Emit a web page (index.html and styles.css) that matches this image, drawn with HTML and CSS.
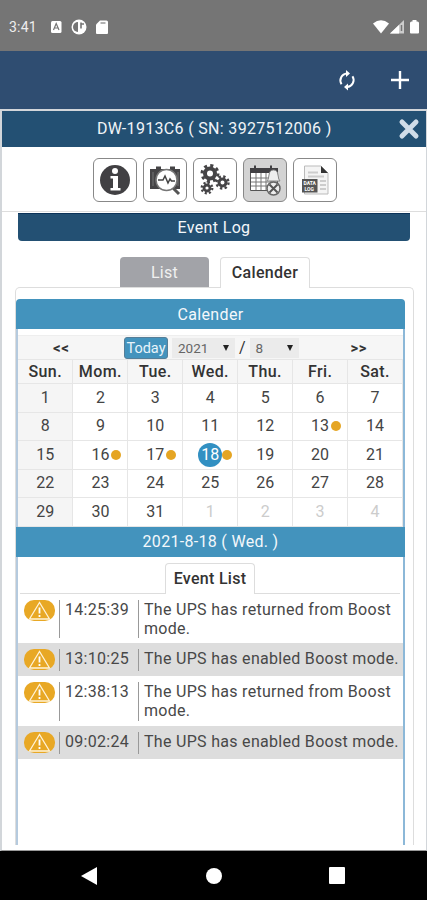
FILE: index.html
```html
<!DOCTYPE html>
<html lang="en">

<head>
    <meta charset="UTF-8">
    <meta name="viewport" content="width=device-width, initial-scale=1.0">
    <title>Event Log</title>
    <link rel="stylesheet" href="styles.css">
</head>

<body>
    <div class="status-bar">
        <span class="clock">3:41</span>
        <svg class="status-left" width="60" height="18" viewBox="0 0 60 18">
            <rect x="2" y="3" width="10.500" height="12" rx="1.500" fill="#fff" />
            <path d="M4.500 12L7.200 5.500L10 12M5.500 10h3.500" fill="none" stroke="#757575" stroke-width="1.200" />
            <circle cx="30" cy="9" r="7.500" fill="#fff" />
            <path d="M29 4a5 5 0 0 0 0 10z" fill="#757575" />
            <path d="M32 4.500v6M32 6h3" fill="none" stroke="#757575" stroke-width="1.600" />
            <path d="M51 2.500h6.500q1.500 0 1.500 1.500v11q0 1-1 1H48q-1 0-1-1V6.500z" fill="#fff" />
            <path d="M51.500 5h5" stroke="#999" stroke-width="1.500" />
        </svg>
        <svg class="status-right" width="48" height="18" viewBox="0 0 48 18">
            <path d="M0 5.500Q8 -1 16 5.500L8 15.500z" fill="#fff" />
            <path d="M17 15.500L31 2v13.500z" fill="#ccc" />
            <path d="M17 15.500L26 7v8.500z" fill="#fff" />
            <path d="M28.500 7v6" stroke="#757575" stroke-width="1.500" />
            <path d="M37 5q0-1.500 1.500-1.500h1V2h4v1.500h1Q46 3.500 46 5v9.500q0 1-1 1h-7q-1 0-1-1z" fill="#fff" />
        </svg>
    </div>

    <div class="app-bar">
        <svg width="24" height="24" viewBox="0 0 24 24">
            <path d="M12 5.500a7 7 0 0 0-5.500 10.700M12 19a7 7 0 0 0 5.500-10.700" fill="none" stroke="#fff" stroke-width="2" />
            <path d="M11 2v7l4-3.500zM13 15.500v7L9 19z" fill="#fff" />
        </svg>
        <svg width="20" height="20" viewBox="0 0 20 20">
            <path d="M10 1v18M1 10h18" stroke="#fff" stroke-width="2.400" />
        </svg>
    </div>

    <div class="frame">
        <div class="device-title">
            <span>DW-1913C6 ( SN: 3927512006 )</span>
            <svg class="close" width="22" height="22" viewBox="0 0 22 22">
                <path d="M4 4l14 14M18 4L4 18" stroke="#d0dce8" stroke-width="5" stroke-linecap="round" />
            </svg>
        </div>

        <div class="toolbar">
            <div class="tool">
                <svg width="42" height="42" viewBox="0 0 42 42">
                    <circle cx="21" cy="21" r="15" fill="#414043" />
                    <circle cx="21" cy="12" r="3" fill="#fff" />
                    <path d="M16.500 17H24v12h2.500v2.500h-10V29H19v-9.500h-2.500z" fill="#fff" />
                </svg>
            </div>
            <div class="tool">
                <svg width="42" height="42" viewBox="0 0 42 42">
                    <path d="M6 10h30v20H6z" fill="#454446" />
                    <path d="M12 7.500h5V10h-5zM26 7.500h5V10h-5z" fill="#454446" />
                    <path d="M9 13v14M34 13v14" stroke="#777" />
                    <circle cx="22.500" cy="21" r="10.500" fill="#fff" stroke="#777" stroke-width="1.500" />
                    <path d="M14 21h5l2-4 3 7 2-4 1.500 2h3.500" fill="none" stroke="#444" stroke-width="1.500" />
                    <path d="M29.500 29.500l5.500 5.500" stroke="#555" stroke-width="3" />
                </svg>
            </div>
            <div class="tool">
                <svg width="42" height="42" viewBox="0 0 42 42" fill="none" stroke="#454446">
                    <circle cx="16" cy="14.500" r="5" stroke-width="4" />
                    <circle cx="16" cy="14.500" r="8" stroke-width="3" stroke-dasharray="3.100 3.180" />
                    <circle cx="28.500" cy="23.500" r="3.500" stroke-width="3" />
                    <circle cx="28.500" cy="23.500" r="6" stroke-width="2.400" stroke-dasharray="2.350 2.360" />
                    <circle cx="13" cy="29" r="3" stroke-width="2.800" />
                    <circle cx="13" cy="29" r="5.300" stroke-width="2.300" stroke-dasharray="2.080 2.080" />
                </svg>
            </div>
            <div class="tool active">
                <svg width="42" height="42" viewBox="0 0 42 42">
                    <path d="M6.500 10.500h27v21h-27z" fill="#fff" stroke="#555" />
                    <path d="M6 9h28v5H6z" fill="#414043" />
                    <path d="M11 6.500v5M27 6.500v5" stroke="#414043" stroke-width="2" />
                    <path d="M12 14v17M17 14v17M22 14v17M27 14v17M7 19h26M7 23h26M7 27h26" stroke="#777" />
                    <path d="M23 22q1.500-1 2-6 .5-5 4.500-5t4.500 5q.5 5 2 6z" fill="#eee" stroke="#888" />
                    <circle cx="29.500" cy="29.500" r="6.500" fill="#eee" stroke="#666" stroke-width="1.500" />
                    <path d="M25.500 25.500l8 8M33.500 25.500l-8 8" stroke="#555" stroke-width="2" />
                </svg>
            </div>
            <div class="tool">
                <svg width="42" height="42" viewBox="0 0 42 42">
                    <path d="M10.500 7H27l7 7v21H10.500z" fill="#f4f4f4" stroke="#bbb" />
                    <path d="M27 7v7h7z" fill="#333" />
                    <path d="M14 13.500h10M14 17.500h16M26 22h6M26 26h6M26 30h6" stroke="#ccc" stroke-width="2" />
                    <rect x="8" y="20" width="15.500" height="13.500" fill="#555" />
                    <text class="icon-text" x="9.500" y="26">DATA</text>
                    <text class="icon-text" x="10.500" y="32">LOG</text>
                </svg>
            </div>
        </div>

        <div class="page">
            <h2 class="page-title">Event Log</h2>

            <div class="tabs">
                <div class="tab">List</div>
                <div class="tab selected">Calender</div>
            </div>

            <div class="panel">
                <h3 class="panel-title">Calender</h3>
                <div class="calendar">
                    <div class="picker">
                        <b class="prev">&lt;&lt;</b>
                        <div class="picker-date">
                            <span class="today">Today</span>
                            <span class="select year">2021<i></i></span>
                            <span>/</span>
                            <span class="select month">8<i></i></span>
                        </div>
                        <b class="next">&gt;&gt;</b>
                    </div>
                    <table>
                        <tr><th>Sun.</th><th>Mom.</th><th>Tue.</th><th>Wed.</th><th>Thu.</th><th>Fri.</th><th>Sat.</th></tr>
                        <tr><td>1</td><td>2</td><td>3</td><td>4</td><td>5</td><td>6</td><td>7</td></tr>
                        <tr><td>8</td><td>9</td><td>10</td><td>11</td><td>12</td><td><span class="event">13</span></td><td>14</td></tr>
                        <tr><td>15</td><td><span class="event">16</span></td><td><span class="event">17</span></td><td><span class="event current">18</span></td><td>19</td><td>20</td><td>21</td></tr>
                        <tr><td>22</td><td>23</td><td>24</td><td>25</td><td>26</td><td>27</td><td>28</td></tr>
                        <tr><td>29</td><td>30</td><td>31</td><td class="other">1</td><td class="other">2</td><td class="other">3</td><td class="other">4</td></tr>
                    </table>
                    <div class="date-title">2021-8-18 ( Wed. )</div>
                    <div class="list-tabs">
                        <div class="list-tab">Event List</div>
                    </div>
                    <div class="log">
                        <svg class="warn" width="31" height="22" viewBox="0 0 31 22"><rect width="31" height="21" rx="10" fill="#e8a825" /><path d="M15.500 2.500L5.500 19h20z" fill="none" stroke="#fff3d8" stroke-width="1.300" /><path d="M15.500 7.500v6M15.500 15v2" stroke="#fff" stroke-width="1.800" /></svg>
                        <span class="time">14:25:39</span>
                        <span class="message">The UPS has returned from Boost mode.</span>
                    </div>
                    <div class="log">
                        <svg class="warn" width="31" height="22" viewBox="0 0 31 22"><rect width="31" height="21" rx="10" fill="#e8a825" /><path d="M15.500 2.500L5.500 19h20z" fill="none" stroke="#fff3d8" stroke-width="1.300" /><path d="M15.500 7.500v6M15.500 15v2" stroke="#fff" stroke-width="1.800" /></svg>
                        <span class="time">13:10:25</span>
                        <span class="message">The UPS has enabled Boost mode.</span>
                    </div>
                    <div class="log">
                        <svg class="warn" width="31" height="22" viewBox="0 0 31 22"><rect width="31" height="21" rx="10" fill="#e8a825" /><path d="M15.500 2.500L5.500 19h20z" fill="none" stroke="#fff3d8" stroke-width="1.300" /><path d="M15.500 7.500v6M15.500 15v2" stroke="#fff" stroke-width="1.800" /></svg>
                        <span class="time">12:38:13</span>
                        <span class="message">The UPS has returned from Boost mode.</span>
                    </div>
                    <div class="log">
                        <svg class="warn" width="31" height="22" viewBox="0 0 31 22"><rect width="31" height="21" rx="10" fill="#e8a825" /><path d="M15.500 2.500L5.500 19h20z" fill="none" stroke="#fff3d8" stroke-width="1.300" /><path d="M15.500 7.500v6M15.500 15v2" stroke="#fff" stroke-width="1.800" /></svg>
                        <span class="time">09:02:24</span>
                        <span class="message">The UPS has enabled Boost mode.</span>
                    </div>
                </div>
            </div>
        </div>
    </div>

    <div class="nav-bar">
        <svg width="18" height="18" viewBox="0 0 18 18"><path d="M16 0v18L0 9z" fill="#fff" /></svg>
        <svg width="16" height="16" viewBox="0 0 16 16"><circle cx="8" cy="8" r="8" fill="#fff" /></svg>
        <svg width="16" height="17" viewBox="0 0 16 17"><rect width="16" height="17" rx="1" fill="#fff" /></svg>
    </div>
</body>

</html>
```
FILE: styles.css
```css
* {
    box-sizing: border-box;
}

body {
    margin: 0;
    height: 900px;
    display: flex;
    flex-direction: column;
    overflow: hidden;
    background: #fff;
    color: #444;
    font-family: Roboto, sans-serif;
    font-size: 16px;
}

svg {
    display: block;
    flex: none;
}

.status-bar {
    height: 51px;
    flex: none;
    display: flex;
    align-items: center;
    padding: 2px 6px 0 9px;
    background: #757575;
    color: #eee;
}

.clock {
    width: 40px;
    font-size: 14px;
    letter-spacing: 0.2px;
}

.status-right {
    margin-left: auto;
}

.app-bar {
    height: 58px;
    flex: none;
    display: flex;
    align-items: center;
    justify-content: flex-end;
    gap: 31px;
    padding: 0 17px 0 0;
    background: #2f4d71;
}

.frame {
    height: 742px;
    flex: none;
    display: flex;
    flex-direction: column;
    border: 2px solid #d2d6da;
    border-right-width: 1px;
    border-bottom: 1px solid #999;
}

.device-title {
    height: 36px;
    flex: none;
    display: flex;
    align-items: center;
    padding: 0 6px 1px 95px;
    background: #235073;
    color: #f0f4f8;
    letter-spacing: 0.32px;
}

.close {
    margin-left: auto;
}

.toolbar {
    height: 65px;
    flex: none;
    display: flex;
    gap: 6px;
    padding: 11px 0 0 91px;
    border-bottom: 1px solid #ddd;
}

.tool {
    width: 44px;
    height: 44px;
    border: 1px solid #888;
    border-radius: 6px;
}

.tool.active {
    background: #d3d3d3;
}

.icon-text {
    font: bold 5px Roboto, sans-serif;
    fill: #fff;
}

.page {
    flex: 1;
    min-height: 0;
    display: flex;
    flex-direction: column;
    padding: 1px 12px 5px 13px;
}

.page-title,
.panel-title {
    margin: 0;
    font-size: 16px;
    font-weight: normal;
    text-align: center;
    color: #f4f8fb;
    letter-spacing: 0.35px;
}

.page-title {
    height: 28px;
    flex: none;
    margin: 0 4px 0 3px;
    line-height: 27px;
    background: #235073;
    border-top: 1px solid #0c3359;
    border-radius: 0 0 4px 4px;
}

.tabs {
    display: flex;
    gap: 11px;
    margin: 16px 0 -1px 105px;
    z-index: 1;
}

.tab {
    width: 89px;
    height: 31px;
    line-height: 32px;
    text-align: center;
    background: #a2a3a8;
    color: #f0f0f0;
    border-radius: 4px 4px 0 0;
    border-bottom: 1px solid #ddd;
    letter-spacing: 0.3px;
}

.tab.selected {
    width: 90px;
    background: #fff;
    border: 1px solid #ddd;
    border-bottom: 0;
    color: #333;
    font-weight: 500;
    line-height: 30px;
}

.panel {
    flex: 1;
    min-height: 0;
    display: flex;
    flex-direction: column;
    padding: 11px 8px 0 0;
    border: 1px solid #ddd;
    border-bottom: 0;
    border-radius: 5px 5px 0 0;
}

.panel-title {
    height: 30px;
    flex: none;
    line-height: 31px;
    background: #4393bd;
    border-radius: 4px 4px 0 0;
}

.calendar {
    flex: 1;
    min-height: 0;
    padding-top: 6px;
    border-left: 2px solid #b5cade;
    border-right: 2px solid #8cb8d8;
}

.picker {
    height: 24px;
    display: flex;
    align-items: center;
    background: #f6f6f6;
    border-top: 1px solid #eee;
    color: #333;
}

.picker b {
    font-size: 15px;
    letter-spacing: 0.5px;
}

.prev {
    width: 106px;
    padding-left: 35px;
}

.picker-date {
    display: flex;
    align-items: center;
    gap: 4px;
}

.today {
    width: 44px;
    height: 22px;
    line-height: 21px;
    text-align: center;
    background: #4393bd;
    border: 1px solid #557e98;
    border-radius: 3px;
    color: #e8f4fb;
    font-size: 14.500px;
}

.select {
    height: 20px;
    display: flex;
    align-items: center;
    justify-content: space-between;
    padding: 0 6px;
    background: #ebebeb;
    color: #666;
    font-size: 13.500px;
}

.select i {
    border: 3px solid transparent;
    border-top: 6px solid #222;
    border-bottom: 0;
}

.year {
    width: 63px;
}

.month {
    width: 49px;
}

.next {
    margin-left: 52px;
}

table {
    width: 100%;
    table-layout: fixed;
    border-collapse: collapse;
}

th,
td {
    height: 28.500px;
    padding: 0;
    border: 1px solid #e6e6e6;
    border-left: 0;
    text-align: center;
    line-height: 24px;
}

th {
    height: 24px;
    background: #f6f6f6;
    color: #333;
    font-weight: 500;
    letter-spacing: 0.4px;
    line-height: 22px;
}

td:first-child {
    background: #f5f5f5;
}

td.other {
    color: #ccc;
}

.event {
    position: relative;
}

.event::after {
    content: "";
    position: absolute;
    left: 100%;
    top: 5px;
    width: 10px;
    height: 10px;
    margin-left: 2px;
    border-radius: 50%;
    background: #e5a523;
}

.current {
    display: inline-block;
    width: 24px;
    height: 24px;
    border-radius: 50%;
    background: #3290c2;
    color: #fff;
    vertical-align: middle;
}

.current::after {
    margin-left: 0;
    top: 7px;
}

.date-title {
    height: 30px;
    margin: 0 -2px;
    line-height: 30px;
    text-align: center;
    background: #4393bd;
    color: #f4f8fb;
    letter-spacing: 0.3px;
}

.list-tabs {
    height: 37px;
    margin: 0 3px 0 2px;
    padding: 6px 0 0 145px;
    border-bottom: 1px solid #ddd;
}

.list-tab {
    width: 90px;
    height: 31px;
    line-height: 29px;
    text-align: center;
    background: #fff;
    border: 1px solid #ddd;
    border-bottom: 0;
    border-radius: 4px 4px 0 0;
    color: #333;
    font-weight: 500;
    letter-spacing: 0.3px;
}

.log {
    display: flex;
    padding: 6px 0 5px;
    line-height: 19.250px;
    color: #484848;
}

.log:nth-child(even) {
    background: #ddd;
}

.warn {
    margin: 0 4px 0 6px;
}

.time {
    width: 79px;
    padding-left: 5px;
    border-left: 1px solid #999;
    letter-spacing: 0.3px;
}

.message {
    flex: 1;
    padding-left: 5px;
    border-left: 1px solid #999;
    letter-spacing: 0.3px;
}

.nav-bar {
    flex: 1;
    display: flex;
    align-items: center;
    gap: 107px;
    padding-left: 81px;
    background: #000;
}
```
